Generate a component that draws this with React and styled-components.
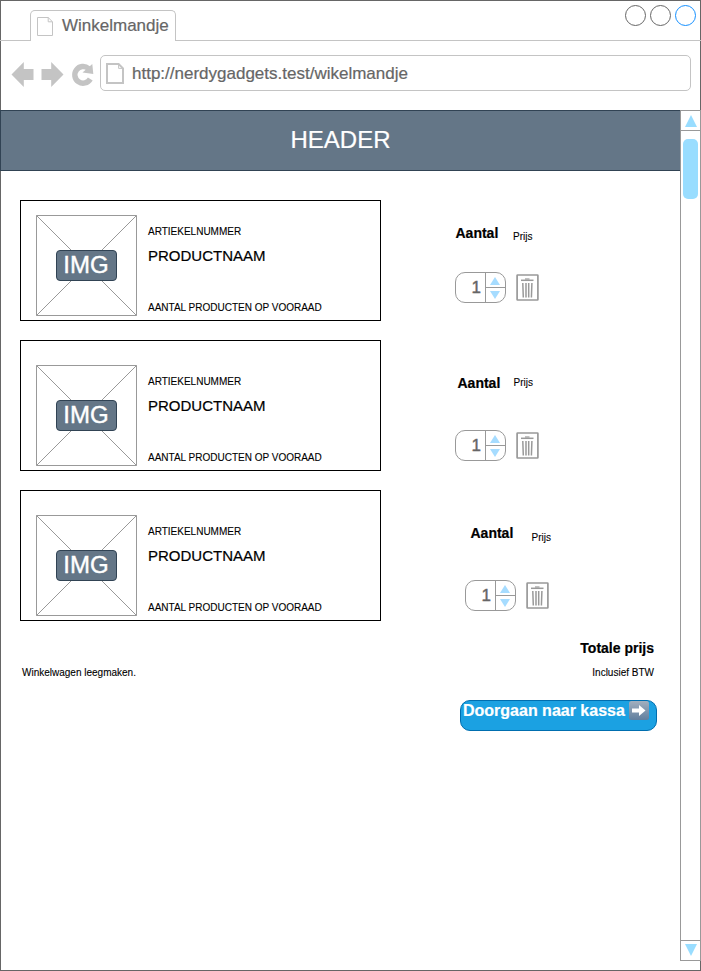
import React from "react";
import styled, { createGlobalStyle } from "styled-components";

const GlobalStyle = createGlobalStyle`
  *, *::before, *::after { box-sizing: border-box; }
  body {
    margin: 0;
    background: #fff;
    font-family: "Liberation Sans", Arial, sans-serif;
    color: #000;
    -webkit-text-stroke: 0.2px currentColor;
  }
  svg { display: block; flex: none; }
`;

const BrowserWindow = styled.div`
  position: relative;
  isolation: isolate;
  width: 701px;
  height: 971px;
  display: flex;
  flex-direction: column;
  background: #fff;
  overflow: hidden;
  &::before {
    content: "";
    position: absolute;
    z-index: -1;
    inset: 0;
    border: 1px solid #666;
  }
`;

const TitleBar = styled.div`
  flex: none;
  height: 41px;
  display: flex;
  align-items: flex-end;
`;

const TabRule = styled.div`
  flex: none;
  width: 30px;
  height: 1px;
  background: #c4c4c4;
`;

const Tab = styled.div`
  width: 146px;
  height: 31px;
  border: 1px solid #c4c4c4;
  border-bottom: 0;
  border-radius: 5px 5px 0 0;
  padding: 0 0 0 6px;
  display: flex;
  align-items: center;
  gap: 9px;
  font-size: 17px;
  line-height: 20px;
  color: #666;
  white-space: nowrap;
`;

const TitleEnd = styled.div`
  flex: 1;
  height: 41px;
  display: flex;
  justify-content: flex-end;
  gap: 4px;
  padding: 5px 5px 0 0;
  border-bottom: 1px solid #c4c4c4;
`;

const WindowButton = styled.div`
  width: 21px;
  height: 21px;
  border: 1px solid ${(p) => p.$color};
  border-radius: 50%;
`;

const NavBar = styled.div`
  flex: none;
  height: 69px;
  padding: 14px 10px 0 11px;
  display: flex;
  align-items: flex-start;
`;

const NavIcons = styled.div`
  width: 89px;
  padding-top: 7px;
`;

const AddressBar = styled.div`
  flex: 1;
  height: 36px;
  border: 1px solid #c4c4c4;
  border-radius: 5px;
  padding-left: 5px;
  display: flex;
  align-items: center;
  gap: 8px;
  font-size: 17px;
  color: #666;
`;

const Address = styled.span`
  line-height: 20px;
  padding-top: 2px;
`;

const Viewport = styled.div`
  display: flex;
  height: 851px;
`;

const Page = styled.main`
  width: 680px;
`;

const Header = styled.header`
  height: 61px;
  background: #647687;
  border: 1px solid #314354;
  border-right: 0;
  color: #fff;
  font-size: 24px;
  line-height: 57px;
  text-align: center;
`;

const ScrollBar = styled.div`
  width: 21px;
  border: 1px solid #999;
  background: #fff;
  display: flex;
  flex-direction: column;
  justify-content: space-between;
`;

const ScrollButton = styled.div`
  height: 20px;
  border-top: ${(p) => (p.$end ? "1px solid #999" : "0")};
  border-bottom: ${(p) => (p.$end ? "0" : "1px solid #999")};
  display: flex;
  justify-content: center;
  padding-top: ${(p) => (p.$end ? "3px" : "4px")};
`;

const ScrollTrack = styled.div`
  flex: 1;
  padding: 8px 2px;
`;

const ScrollThumb = styled.div`
  height: 60px;
  width: 15px;
  border-radius: 5px;
  background: #99ddff;
`;

const CartList = styled.div`
  padding: 29px 0 0 20px;
  display: flex;
  flex-direction: column;
  gap: 19px;
`;

const CartRow = styled.div`
  display: flex;
  align-items: flex-start;
`;

const ProductCard = styled.div`
  width: 361px;
  height: ${(p) => (p.$tall ? "131px" : "121px")};
  border: 1px solid #000;
  padding: ${(p) => (p.$tall ? "24px" : "14px")} 0 0 15px;
  display: flex;
  gap: 11px;
`;

const ImageBox = styled.div`
  display: grid;
  width: 101px;
  height: 101px;
  > * { grid-area: 1 / 1; }
`;

const ImageLabel = styled.div`
  place-self: center;
  width: 61px;
  height: 31px;
  border: 1px solid #314354;
  border-radius: 4px;
  background: #647687;
  color: #fff;
  font-size: 24px;
  line-height: 28px;
  text-align: center;
  padding-right: 1px;
  -webkit-text-stroke-width: 0.4px;
`;

const ProductInfo = styled.div`
  padding-top: 11px;
  display: flex;
  flex-direction: column;
  white-space: nowrap;
`;

const Caption = styled.span`
  font-size: 10px;
  line-height: 12px;
  -webkit-text-stroke-width: 0.1px;
`;

const ProductName = styled.span`
  font-size: 15px;
  line-height: 18px;
  margin: 9px 0 37px;
`;

const RowActions = styled.div`
  padding-left: ${(p) => p.$indent}px;
`;

const Labels = styled.div`
  display: flex;
  align-items: flex-start;
  padding: ${(p) => p.$top}px 0 0 ${(p) => p.$left}px;
  height: 60px;
`;

const AmountLabel = styled.strong`
  font-size: 14px;
  line-height: 16px;
  width: ${(p) => p.$width}px;
`;

const PriceLabel = styled(Caption)`
  padding-top: ${(p) => p.$drop}px;
`;

const Controls = styled.div`
  display: flex;
  align-items: center;
  gap: 10px;
  margin-top: ${(p) => p.$top}px;
`;

const Stepper = styled.div`
  width: 51px;
  height: 31px;
  border: 1px solid #999;
  border-radius: 10px;
  display: flex;
`;

const StepperValue = styled.div`
  width: 30px;
  padding-right: 4px;
  border-right: 1px solid #999;
  color: #666;
  font-size: 17px;
  line-height: 30px;
  text-align: right;
  -webkit-text-stroke-width: 0.4px;
`;

const StepperArrows = styled.div`
  flex: 1;
  display: flex;
  flex-direction: column;
`;

const StepHalf = styled.div`
  height: ${(p) => (p.$up ? "15px" : "14px")};
  border-bottom: ${(p) => (p.$up ? "1px solid #999" : "0")};
  display: flex;
  padding: ${(p) => (p.$up ? "4px" : "3px")} 0 0 4px;
`;

const Summary = styled.div`
  display: flex;
  flex-direction: column;
  align-items: flex-end;
  padding: 19px 26px 0 0;
`;

const TotalLabel = styled.strong`
  font-size: 14px;
  line-height: 16px;
`;

const SummaryLine = styled.div`
  align-self: stretch;
  display: flex;
  justify-content: space-between;
  padding-left: 22px;
  margin-top: 11px;
`;

const CheckoutButton = styled.button`
  margin: 21px -3px 0 0;
  width: 197px;
  height: 31px;
  padding: 0 0 0 2px;
  border: 1px solid #006eaf;
  border-radius: 10px;
  background: #1ba1e2;
  color: #fff;
  font: bold 16px/19px "Liberation Sans", Arial, sans-serif;
  display: flex;
  align-items: flex-start;
  gap: 4px;
  white-space: nowrap;
  -webkit-text-stroke: 0.2px #fff;
`;

function PageIcon({ width, height, stroke }) {
  const o = stroke / 2;
  const c = width * 0.3;
  return (
    <svg width={width} height={height} fill="none" stroke="#c4c4c4" strokeWidth={stroke}>
      <path d={`M${o} ${o}H${width - c}L${width - o} ${c}V${height - o}H${o}Z`} />
      <path d={`M${width - c} ${o}V${c}H${width - o}`} strokeWidth="1" />
    </svg>
  );
}

function NavigationIcons() {
  return (
    <svg width="84" height="26" fill="#c4c4c4">
      <path d="M0.500 12.500L12.800 0V7H22.500V18H12.800V25Z" />
      <path d="M52.500 12.500L40.200 0V7H30.500V18H40.200V25Z" />
      <path
        d="M79.300 17A8.300 8.300 0 1 1 77.500 6.500"
        fill="none"
        stroke="#c4c4c4"
        strokeWidth="5.500"
      />
      <path d="M81.300 2L82.300 12L71.500 10.500Z" />
    </svg>
  );
}

function Triangle({ down, width, height, color = "#99ddff" }) {
  const points = down
    ? `0,0 ${width},0 ${width / 2},${height}`
    : `0,${height} ${width},${height} ${width / 2},0`;
  return (
    <svg width={width} height={height}>
      <polygon points={points} fill={color} />
    </svg>
  );
}

function TrashIcon() {
  return (
    <svg width="23" height="27" fill="none" stroke="#999">
      <rect x="1.100" y="1" width="20.800" height="25" rx="0.500" strokeWidth="1.700" />
      <path d="M5 6.300H17.500" strokeWidth="1.500" />
      <path d="M9 5H13.500" strokeWidth="1.200" />
      <path d="M6.800 9L7.300 23.500M10 9V23.500M12.700 9V23.500M15.900 9L15.400 23.500" strokeWidth="1.500" />
    </svg>
  );
}

function ArrowBadge() {
  return (
    <svg width="21" height="20" viewBox="0 0 21 20">
      <defs>
        <linearGradient id="badge" x1="0" y1="0" x2="0" y2="1">
          <stop offset="0" stopColor="#a3afbe" />
          <stop offset="1" stopColor="#607f9f" />
        </linearGradient>
      </defs>
      <rect x="0" y="0" width="20" height="19" rx="2.500" fill="url(#badge)" />
      <path d="M3 7.500H10V4L16.500 9.500L10 15V11.500H3Z" fill="#fff" />
    </svg>
  );
}

function CartItem({ tall, indent, labelTop, labelLeft, priceOffset, priceDrop, controlsTop }) {
  return (
    <CartRow>
      <ProductCard $tall={tall}>
        <ImageBox>
          <svg width="101" height="101" fill="none" stroke="#999">
            <path d="M0.500 0.500H100.500V100.500H0.500ZL100.500 100.500M100.500 0.500L0.500 100.500" />
          </svg>
          <ImageLabel>IMG</ImageLabel>
        </ImageBox>
        <ProductInfo>
          <Caption>ARTIEKELNUMMER</Caption>
          <ProductName>PRODUCTNAAM</ProductName>
          <Caption>AANTAL PRODUCTEN OP VOORAAD</Caption>
        </ProductInfo>
      </ProductCard>
      <RowActions $indent={indent}>
        <Labels $top={labelTop} $left={labelLeft}>
          <AmountLabel $width={priceOffset}>Aantal</AmountLabel>
          <PriceLabel $drop={priceDrop}>Prijs</PriceLabel>
        </Labels>
        <Controls $top={controlsTop}>
          <Stepper>
            <StepperValue>1</StepperValue>
            <StepperArrows>
              <StepHalf $up>
                <Triangle width={10} height={8} color="#a6dcff" />
              </StepHalf>
              <StepHalf>
                <Triangle down width={10} height={8} color="#a6dcff" />
              </StepHalf>
            </StepperArrows>
          </Stepper>
          <TrashIcon />
        </Controls>
      </RowActions>
    </CartRow>
  );
}

const items = [
  { indent: 74, labelTop: 25, labelLeft: 0.5, priceOffset: 57.5, priceDrop: 6, controlsTop: 12 },
  { tall: true, indent: 74, labelTop: 35, labelLeft: 2.5, priceOffset: 56, priceDrop: 2, controlsTop: 30 },
  { tall: true, indent: 84, labelTop: 35, labelLeft: 5.5, priceOffset: 61, priceDrop: 7, controlsTop: 30 },
];

export default function App() {
  return (
    <>
      <GlobalStyle />
      <BrowserWindow>
        <TitleBar>
          <TabRule />
          <Tab>
            <PageIcon width={16} height={19} stroke={1} />
            <span>Winkelmandje</span>
          </Tab>
          <TitleEnd>
            <WindowButton $color="#666" />
            <WindowButton $color="#666" />
            <WindowButton $color="#1590ff" />
          </TitleEnd>
        </TitleBar>
        <NavBar>
          <NavIcons>
            <NavigationIcons />
          </NavIcons>
          <AddressBar>
            <PageIcon width={18} height={21} stroke={2} />
            <Address>http://nerdygadgets.test/wikelmandje</Address>
          </AddressBar>
        </NavBar>
        <Viewport>
          <Page>
            <Header>HEADER</Header>
            <CartList>
              {items.map((item, i) => (
                <CartItem key={i} {...item} />
              ))}
            </CartList>
            <Summary>
              <TotalLabel>Totale prijs</TotalLabel>
              <SummaryLine>
                <Caption>Winkelwagen leegmaken.</Caption>
                <Caption>Inclusief BTW</Caption>
              </SummaryLine>
              <CheckoutButton>
                <span>Doorgaan naar kassa</span>
                <ArrowBadge />
              </CheckoutButton>
            </Summary>
          </Page>
          <ScrollBar>
            <ScrollButton>
              <Triangle width={12} height={12} />
            </ScrollButton>
            <ScrollTrack>
              <ScrollThumb />
            </ScrollTrack>
            <ScrollButton $end>
              <Triangle down width={12} height={12} />
            </ScrollButton>
          </ScrollBar>
        </Viewport>
      </BrowserWindow>
    </>
  );
}
